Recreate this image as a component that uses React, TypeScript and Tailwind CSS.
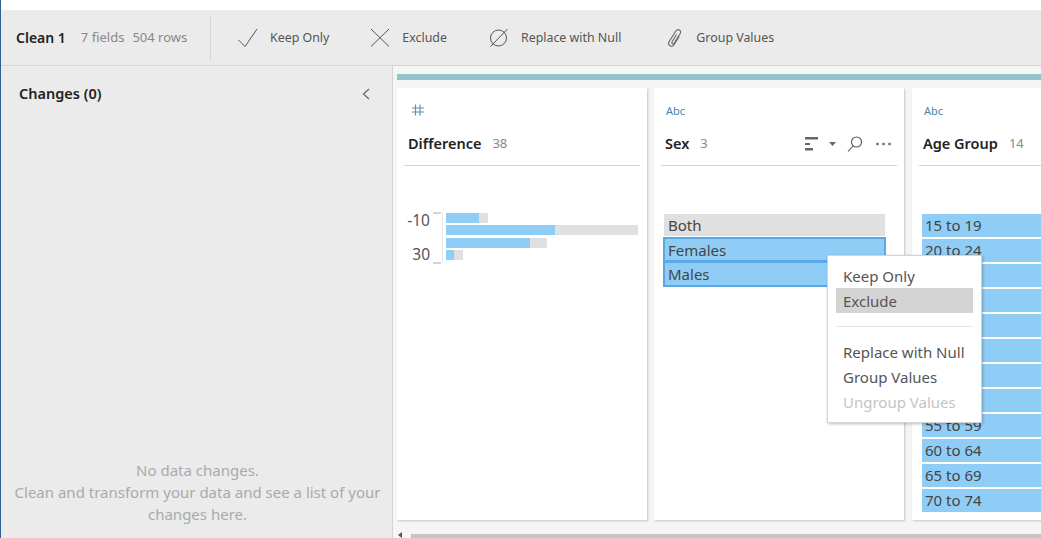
const ageGroups = ['15 to 19', '20 to 24', '25 to 29', '30 to 34', '35 to 39', '40 to 44', '45 to 49', '50 to 54', '55 to 59', '60 to 64', '65 to 69', '70 to 74'];

/* Histogram rows: blue part and full width of the grey part */
const diffBars = [
  { blue: 33, grey: 42, mt: 'mt-0' },
  { blue: 109, grey: 192, mt: 'mt-[2px]' },
  { blue: 84, grey: 101, mt: 'mt-[3px]' },
  { blue: 8, grey: 17, mt: 'mt-[2px]' },
];

function ToolButton({ icon, label, className }: { icon: React.ReactNode; label: string; className: string }) {
  return (
    <div className={`flex items-center ${className}`}>
      <div className="flex h-[20px] w-[20px] items-center justify-center">{icon}</div>
      <span className="ml-[12px] pt-[1px] text-[12.4px] text-[#555]">{label}</span>
    </div>
  );
}

function CardHeader({ type, title, count, children }: { type: React.ReactNode; title: string; count: string; children?: React.ReactNode }) {
  return (
    <div className="mx-[7px]">
      <div className="flex h-[44px] items-end pb-[13px] pl-[5px] text-[11px] text-[#4a86a8]">{type}</div>
      <div className="flex h-[34px] items-center border-b border-[#d4d4d4] pb-[10px] pl-[4px]">
        <span className="text-[14.5px] font-semibold text-[#222]">{title}</span>
        <span className="ml-[11px] text-[13px] text-[#888]">{count}</span>
        {children}
      </div>
    </div>
  );
}

export default function App() {
  return (
    <div className="relative h-[538px] w-[1041px] overflow-hidden bg-white font-['Noto_Sans',sans-serif]">
      <div className="absolute left-0 top-0 h-full w-[1px] bg-[#2f5f95]" />
      <div className="h-[10px]" />

      {/* Toolbar */}
      <div className="ml-[1px] flex h-[56px] items-center border-b border-[#d4d4d4] bg-[#ebebeb]">
        <div className="flex h-[44px] w-[210px] items-center border-r border-[#d4d4d4] pl-[15px]">
          <span className="pb-[1px] text-[14px] font-semibold text-[#222]">Clean 1</span>
          <span className="ml-[15px] pt-[1px] text-[13px] text-[#888]">7 fields</span>
          <span className="ml-[8px] pt-[1px] text-[13px] text-[#888]">504 rows</span>
        </div>
        <ToolButton
          className="ml-[27px]"
          label="Keep Only"
          icon={
            <svg width="20" height="20" viewBox="0 0 20 20" fill="none" stroke="#555" strokeWidth="1">
              <path d="M0.500 12L7 18.500 19 1" />
            </svg>
          }
        />
        <ToolButton
          className="ml-[41px]"
          label="Exclude"
          icon={
            <svg width="20" height="20" viewBox="0 0 20 20" fill="none" stroke="#555" strokeWidth="1">
              <path d="M1 1l18 17.500M19 1L1 18.500" />
            </svg>
          }
        />
        <ToolButton
          className="ml-[42px]"
          label="Replace with Null"
          icon={
            <svg width="20" height="20" viewBox="0 0 20 20" fill="none" stroke="#555" strokeWidth="1">
              <circle cx="9.500" cy="10" r="8" />
              <path d="M1.500 18.500L18.500 1" />
            </svg>
          }
        />
        <ToolButton
          className="ml-[43px]"
          label="Group Values"
          icon={
            <svg width="20" height="20" viewBox="0 0 20 20" fill="none" stroke="#666" strokeWidth="1.100">
              <path d="M12.500 6.500L8 14c-.8 1.500 1.200 2.600 2.200 1.200l6-9.700c1.700-3-2.500-5.300-4.300-2.500L5 13.800c-1.900 3.500 3 6.200 5 2.900l5.200-8.200" />
            </svg>
          }
        />
      </div>

      <div className="flex h-[472px]">
        {/* Changes panel */}
        <div className="ml-[1px] flex w-[392px] flex-col border-r border-[#d4d4d4] bg-[#ebebeb]">
          <div className="flex h-[55px] items-center justify-between pl-[18px] pr-[22px]">
            <span className="text-[14.5px] font-semibold text-[#222]">Changes (0)</span>
            <svg width="8" height="12" viewBox="0 0 8 12" fill="none" stroke="#666" strokeWidth="1.200">
              <path d="M7 1L1.500 6 7 11" />
            </svg>
          </div>
          <div className="mb-[13px] mt-auto pl-[12px] pr-[10px] text-center text-[15px] leading-[22px] text-[#aaa]">
            <p>No data changes.</p>
            <p>Clean and transform your data and see a list of your changes here.</p>
          </div>
        </div>

        {/* Profile area */}
        <div className="relative min-w-0 flex-1 bg-[#f5f5f5] pl-[4px] pt-[8px]">
          <div className="h-[6px] bg-[#93c3cb]" />
          <div className="mt-[8px] flex h-[432px] gap-[7px]">
            {/* Difference */}
            <div className="h-full w-[250px] shrink-0 bg-white shadow-[1px_1px_2px_rgba(0,0,0,0.2)]">
              <CardHeader
                title="Difference"
                count="38"
                type={
                  <svg width="14" height="14" viewBox="0 0 14 14" fill="none" stroke="#5f93ae" strokeWidth="1.200" className="mb-[2px] ml-[2px]">
                    <path d="M4.500 1.500v11M9 1.500v11M1 5h12M1 9h12" />
                  </svg>
                }
              />
              <div className="ml-[9px] mt-[46px] flex">
                <div className="relative h-[52px] w-[24px] text-right text-[15.5px] leading-[20px] text-[#555]">
                  <span className="absolute right-0 top-[-2px]">-10</span>
                  <span className="absolute right-0 top-[32px]">30</span>
                </div>
                <div className="ml-[3px] flex h-[52px] w-[8px] flex-col justify-between">
                  <div className="h-[2px] w-[8px] bg-[#d4d4d4]" />
                  <div className="h-[2px] w-[8px] bg-[#d4d4d4]" />
                </div>
                <div className="ml-[1px] mt-[1px] h-[50px] w-[1px] bg-[#e6e6e6]" />
                <div className="ml-[3px] mt-[1px]">
                  {diffBars.map((bar, i) => (
                    <div key={i} className={`h-[10px] ${bar.mt} bg-[#e0e0e0]`} style={{ width: bar.grey }}>
                      <div className="h-full bg-[#90cdf6]" style={{ width: bar.blue }} />
                    </div>
                  ))}
                </div>
              </div>
            </div>

            {/* Sex */}
            <div className="h-full w-[250px] shrink-0 bg-white shadow-[1px_1px_2px_rgba(0,0,0,0.2)]">
              <CardHeader title="Sex" count="3" type="Abc">
                <div className="ml-auto flex items-center pr-[6px]">
                  <svg width="14" height="14" viewBox="0 0 14 14" fill="#666">
                    <rect x="0" y="0" width="13" height="2.500" />
                    <rect x="0" y="6" width="5" height="2" />
                    <rect x="0" y="11" width="8" height="2.500" />
                  </svg>
                  <svg width="7" height="4" viewBox="0 0 7 4" fill="#666" className="ml-[10px]">
                    <path d="M0 0h7L3.500 4z" />
                  </svg>
                  <svg width="16" height="16" viewBox="0 0 16 16" fill="none" stroke="#555" strokeWidth="1.100" className="ml-[11px]">
                    <circle cx="9.500" cy="6" r="5" />
                    <path d="M6 10L1 15.500" />
                  </svg>
                  <svg width="15" height="4" viewBox="0 0 15 4" fill="#666" className="ml-[13px]">
                    <circle cx="1.500" cy="2" r="1.300" />
                    <circle cx="7.500" cy="2" r="1.300" />
                    <circle cx="13.500" cy="2" r="1.300" />
                  </svg>
                </div>
              </CardHeader>
              <div className="ml-[9px] mt-[48px] flex w-[223px] flex-col text-[15px] leading-[20px] text-[#444]">
                <div className="mx-[1px] mb-[1px] flex h-[22px] items-center bg-[#e0e0e0] pl-[4px]">Both</div>
                <div className="flex h-[25px] items-center border-2 border-[#5aa8e6] bg-[#90cdf6] pl-[3px]">Females</div>
                <div className="flex h-[25px] items-center border-2 border-t-[1px] border-[#5aa8e6] bg-[#90cdf6] pl-[3px]">Males</div>
              </div>
            </div>

            {/* Age Group */}
            <div className="ml-[1px] h-full w-[250px] shrink-0 bg-white shadow-[1px_1px_2px_rgba(0,0,0,0.2)]">
              <CardHeader title="Age Group" count="14" type="Abc" />
              <div className="ml-[10px] mt-[48px] flex flex-col gap-[2px] text-[15px] text-[#444]">
                {ageGroups.map(age => (
                  <div key={age} className="flex h-[23px] items-center bg-[#90cdf6] pl-[3px]">{age}</div>
                ))}
              </div>
            </div>
          </div>

          {/* Horizontal scrollbar */}
          <div className="absolute bottom-0 left-[5px] h-0 w-0 border-y-[3px] border-r-[4px] border-y-transparent border-r-[#555]" />
          <div className="absolute bottom-0 left-[18px] right-0 h-[4px] bg-[#c4c4c4]" />
        </div>
      </div>

      {/* Context menu */}
      <div className="absolute left-[827px] top-[255px] w-[155px] border border-[#d4d4d4] bg-white py-[7px] text-[15px] text-[#555] shadow-[1px_1px_3px_rgba(0,0,0,0.25)]">
        <div className="mx-[8px] flex h-[25px] items-center pl-[7px] pt-[1px]">Keep Only</div>
        <div className="mx-[8px] flex h-[25px] items-center bg-[#d4d4d4] pl-[7px] pt-[1px]">Exclude</div>
        <div className="mx-[8px] my-[13px] h-[1px] bg-[#e6e6e6]" />
        <div className="mx-[8px] flex h-[25px] items-center pl-[7px]">Replace with Null</div>
        <div className="mx-[8px] flex h-[25px] items-center pl-[7px]">Group Values</div>
        <div className="mx-[8px] flex h-[25px] items-center pl-[7px] text-[#c4c4c4]">Ungroup Values</div>
      </div>
    </div>
  );
}
